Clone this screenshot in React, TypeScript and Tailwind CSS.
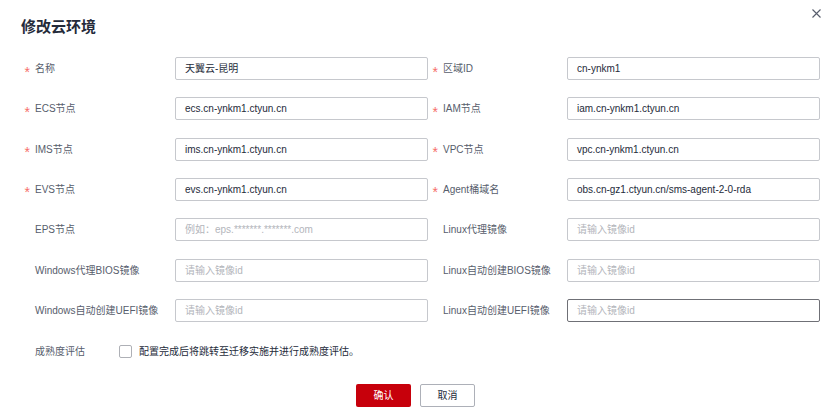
import React from "react";

type Field = {
  label: string;
  required?: boolean;
  value?: string;
  placeholder?: string;
  focused?: boolean;
};

const rows: [Field, Field][] = [
  [
    { label: "名称", required: true, value: "天翼云-昆明" },
    { label: "区域ID", required: true, value: "cn-ynkm1" },
  ],
  [
    { label: "ECS节点", required: true, value: "ecs.cn-ynkm1.ctyun.cn" },
    { label: "IAM节点", required: true, value: "iam.cn-ynkm1.ctyun.cn" },
  ],
  [
    { label: "IMS节点", required: true, value: "ims.cn-ynkm1.ctyun.cn" },
    { label: "VPC节点", required: true, value: "vpc.cn-ynkm1.ctyun.cn" },
  ],
  [
    { label: "EVS节点", required: true, value: "evs.cn-ynkm1.ctyun.cn" },
    { label: "Agent桶域名", required: true, value: "obs.cn-gz1.ctyun.cn/sms-agent-2-0-rda" },
  ],
  [
    { label: "EPS节点", placeholder: "例如：eps.*******.*******.com" },
    { label: "Linux代理镜像", placeholder: "请输入镜像id" },
  ],
  [
    { label: "Windows代理BIOS镜像", placeholder: "请输入镜像id" },
    { label: "Linux自动创建BIOS镜像", placeholder: "请输入镜像id" },
  ],
  [
    { label: "Windows自动创建UEFI镜像", placeholder: "请输入镜像id" },
    { label: "Linux自动创建UEFI镜像", placeholder: "请输入镜像id", focused: true },
  ],
];

function Label({ f, width }: { f: Field; width: string }) {
  return (
    <div className={`flex items-center h-[23px] shrink-0 text-[10px] text-[#575d6c] ${width}`}>
      <span className="w-[11px] flex items-center">
        {f.required ? (
          <span className="text-[#f66f6a] text-[14px] leading-none translate-y-[2.5px] ml-[0.5px]">*</span>
        ) : null}
      </span>
      <span className="whitespace-nowrap">{f.label}</span>
    </div>
  );
}

function Input({ f }: { f: Field }) {
  return (
    <div
      className={`w-[253px] h-[23px] shrink-0 flex items-center pl-[9px] border rounded-[2px] text-[10px] whitespace-nowrap overflow-hidden ${
        f.focused ? "border-[#6f7076]" : "border-[#c6c8cd]"
      }`}
    >
      {f.value ? (
        <span className="text-[#252b3a]">{f.value}</span>
      ) : (
        <span className="text-[#b3b5bb]">{f.placeholder}</span>
      )}
    </div>
  );
}

export default function App() {
  return (
    <div
      className="relative w-[831px] h-[414px] bg-white overflow-hidden"
      style={{ fontFamily: '"Liberation Sans", "Noto Sans CJK SC", sans-serif' }}
    >
      <button className="absolute left-[811px] top-[8px] w-[10px] h-[10px] flex items-center justify-center">
        <svg width="9" height="9" viewBox="0 0 9 9" fill="none" stroke="#575d6c" strokeWidth="1.1">
          <path d="M0.5 0.5 L8.5 8.5 M8.5 0.5 L0.5 8.5" />
        </svg>
      </button>

      <div className="pt-[17px] pl-[21px] h-[37px] text-[15px] leading-[20px] font-bold text-[#252b3a]">
        修改云环境
      </div>

      <div className="mt-[20px] pl-[24px] flex flex-col gap-[17.33px]">
        {rows.map(([l, r], i) => (
          <div key={i} className="flex items-center">
            <Label f={l} width="w-[151px]" />
            <Input f={l} />
            <div className="w-[4px] shrink-0" />
            <Label f={r} width="w-[135px]" />
            <Input f={r} />
          </div>
        ))}
      </div>

      <div className="mt-[23px] pl-[35px] flex items-center h-[13px]">
        <div className="w-[84px] text-[10px] text-[#575d6c] whitespace-nowrap">成熟度评估</div>
        <div className="w-[13px] h-[13px] border border-[#aeb0b6] rounded-[2px] bg-white" />
        <div className="ml-[7px] text-[10px] text-[#252b3a] whitespace-nowrap">
          配置完成后将跳转至迁移实施并进行成熟度评估。
        </div>
      </div>

      <div className="mt-[26px] flex justify-center gap-[9px]">
        <button className="w-[55px] h-[23px] bg-[#c7000b] text-white text-[10px] rounded-[2px]">确认</button>
        <button className="w-[55px] h-[23px] bg-white border border-[#adb0b8] text-[#252b3a] text-[10px] rounded-[2px]">
          取消
        </button>
      </div>
    </div>
  );
}
